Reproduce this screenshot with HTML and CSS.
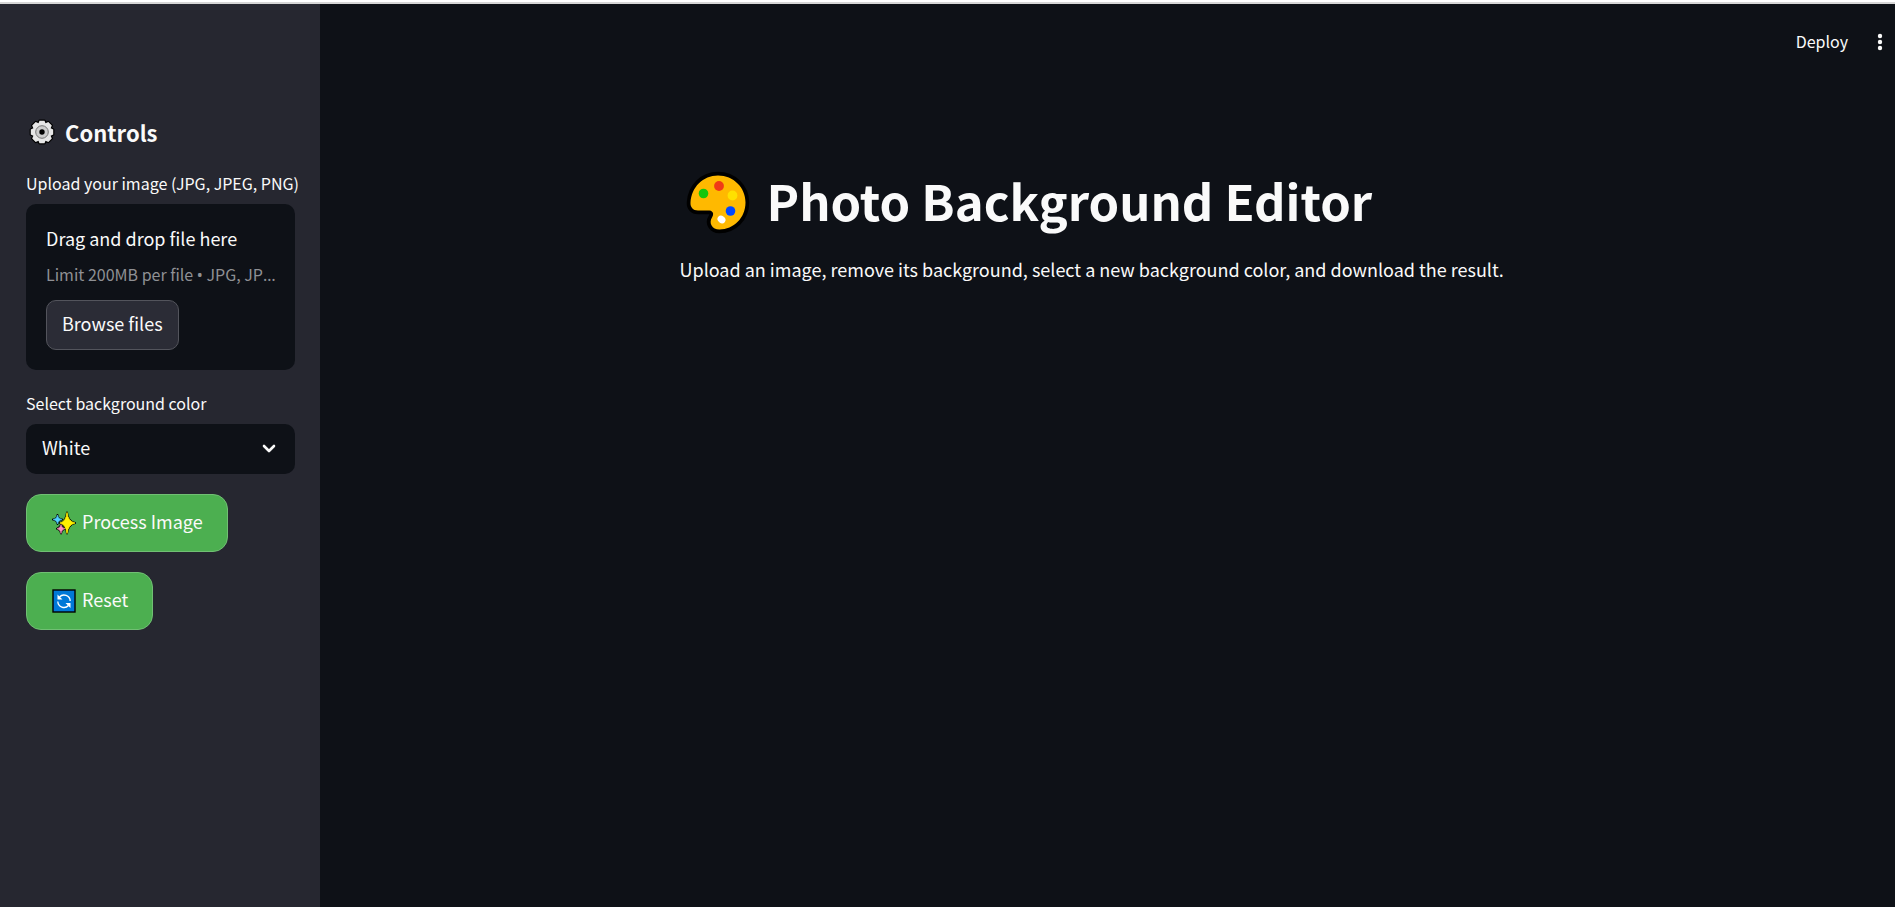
FILE: index.html
```html
<!DOCTYPE html>
<html lang="en">
<head>
<meta charset="utf-8">
<title>Photo Background Editor</title>
<link rel="stylesheet" href="styles.css">
</head>
<body>
<div class="app">
  <aside class="sidebar">
    <h2 class="sidebar-title">
      <svg class="icon-gear" viewBox="0 0 26 26" aria-hidden="true">
        <path d="M10.500 1.800h5l1 2.400 2.800-1.200 3.500 3.500-1.200 2.800 2.600 1.200v5l-2.600 1.200 1.200 2.800-3.500 3.500-2.800-1.200-1 2.400h-5l-1-2.400-2.800 1.200-3.500-3.500 1.200-2.800-2.600-1.200v-5l2.600-1.200-1.200-2.800 3.500-3.500 2.800 1.200z" fill="#000" stroke="#000" stroke-width="2.400" stroke-linejoin="round"/>
        <path d="M10.500 1.800h5l1 2.400 2.800-1.200 3.500 3.500-1.200 2.800 2.600 1.200v5l-2.600 1.200 1.200 2.800-3.500 3.500-2.800-1.200-1 2.400h-5l-1-2.400-2.800 1.200-3.500-3.500 1.200-2.800-2.600-1.200v-5l2.600-1.200-1.200-2.800 3.500-3.500 2.800 1.200z" fill="#e6e6e6"/>
        <circle cx="13" cy="13" r="6.300" fill="#ccc" stroke="#777" stroke-width="1"/>
        <circle cx="13" cy="13" r="2.700" fill="#000"/>
      </svg>
      <span>Controls</span>
    </h2>
    <div class="field">
      <label class="label" for="browse">Upload your image (JPG, JPEG, PNG)</label>
      <section class="dropzone">
        <div class="drop-text">Drag and drop file here</div>
        <div class="drop-limit">Limit 200MB per file <span class="mark">•</span> JPG, JP<span class="mark">…</span></div>
        <button class="browse" id="browse" type="button">Browse files</button>
      </section>
    </div>
    <div class="field field-select">
      <label class="label" for="color">Select background color</label>
      <div class="select-wrap">
        <select class="select" id="color"><option>White</option></select>
        <svg class="chevron" viewBox="0 0 14 10" aria-hidden="true"><path d="M2 2l5 5 5-5" fill="none" stroke="#fafafa" stroke-width="2.600" stroke-linecap="round" stroke-linejoin="round"/></svg>
      </div>
    </div>
    <button class="action" type="button">
      <svg class="icon-action" viewBox="0 0 24 24" aria-hidden="true">
        <g stroke="#000" stroke-width="2" stroke-linejoin="round">
          <path d="M5.500 4Q6 8 10 8.500 6 9 5.500 13 5 9 1 8.500 5 8 5.500 4z"/>
          <path d="M9 13.500Q9.500 17 13 17.700 9.500 18.400 9 22.500 8.500 18.400 5 17.700 8.500 17 9 13.500z"/>
          <path d="M15 1.500Q16 10.500 23 12 16 13.500 15 22.500 14 13.500 8 12 14 10.500 15 1.500z" fill="#fff100"/>
        </g>
        <path d="M5.500 4Q6 8 10 8.500 6 9 5.500 13 5 9 1 8.500 5 8 5.500 4z" fill="#50d0ff" stroke="#50d0ff" stroke-width=".6"/>
        <path d="M9 13.500Q9.500 17 13 17.700 9.500 18.400 9 22.500 8.500 18.400 5 17.700 8.500 17 9 13.500z" fill="#ff8fc0" stroke="#ff8fc0" stroke-width=".6"/>
        <path d="M15 1.500Q16 10.500 23 12 16 13.500 15 22.500 14 13.500 8 12 14 10.500 15 1.500z" fill="#fff100" stroke="#fff100" stroke-width=".8"/>
      </svg>
      <span>Process Image</span>
    </button>
    <button class="action" type="button">
      <svg class="icon-action" viewBox="0 0 24 24" aria-hidden="true">
        <rect x="1" y="1" width="22" height="22" fill="#0078d7" stroke="#000" stroke-width="1.400"/>
        <g fill="none" stroke="#fff" stroke-width="1.300">
          <path d="M7.500 8a6.200 6.200 0 0 1 10.700 4M16.500 16.500A6.200 6.200 0 0 1 5.800 12.500"/>
        </g>
        <path d="M5.500 5.500v5h5zM18.500 19v-5h-5z" fill="#fff"/>
      </svg>
      <span>Reset</span>
    </button>
  </aside>
  <main class="main">
    <header class="toolbar">
      <button class="deploy" type="button">Deploy</button>
      <button class="menu" type="button" aria-label="Menu">
        <svg class="dots" viewBox="0 0 6 18" aria-hidden="true"><g fill="#fafafa"><circle cx="3" cy="3" r="2.200"/><circle cx="3" cy="9" r="2.200"/><circle cx="3" cy="15" r="2.200"/></g></svg>
      </button>
    </header>
    <div class="content">
      <h1 class="title">
        <svg class="icon-palette" viewBox="0 0 64 64" aria-hidden="true">
          <path d="M4.500 32.500C5.500 17 17 5.500 32 5.500c15.500 0 27.500 12 27.500 27 0 15.500-12 27-26 27-7.500 0-11-6.500-7.500-12 2-3 1.500-6.500-2.500-7H12c-5 0-7.800-3.500-7.500-8z" fill="#ffb900" stroke="#000" stroke-width="7.500" stroke-linejoin="round"/>
          <path d="M4.500 32.500C5.500 17 17 5.500 32 5.500c15.500 0 27.500 12 27.500 27 0 15.500-12 27-26 27-7.500 0-11-6.500-7.500-12 2-3 1.500-6.500-2.500-7H12c-5 0-7.800-3.500-7.500-8z" fill="#ffb900"/>
          <circle cx="17.500" cy="23.500" r="4.800" fill="#16c60c"/>
          <circle cx="33" cy="16" r="4.900" fill="#f03a17"/>
          <circle cx="46.500" cy="25.500" r="4.900" fill="#ffe000"/>
          <circle cx="44.500" cy="41" r="4.800" fill="#0047ff"/>
          <ellipse cx="35.500" cy="49.500" rx="4.200" ry="3.500" transform="rotate(40 35.500 49.500)" fill="#fff"/>
        </svg>
        <span class="title-text">Photo Background Editor</span>
      </h1>
      <p class="intro">Upload an image, remove its background, select a new background color, and download the result.</p>
    </div>
  </main>
</div>
</body>
</html>
```
FILE: styles.css
```css
* { box-sizing: border-box; }
body {
  margin: 0;
  background: #0e1117;
  color: #fafafa;
  font-family: "Noto Sans CJK SC", "Noto Sans", sans-serif;
  font-size: 18px;
  line-height: 32px;
}
button, select { font: inherit; color: inherit; }
.app {
  display: flex;
  min-height: 100vh;
  border-top: 2px solid #fff;
  box-shadow: inset 0 2px #d6d6d6;
  padding-top: 2px;
}
.sidebar {
  flex: none;
  width: 320px;
  padding: 110px 25px 40px 26px;
  background: #262730;
  display: flex;
  flex-direction: column;
  align-items: flex-start;
  gap: 20px;
}
.sidebar-title {
  display: flex;
  align-items: center;
  gap: 10px;
  margin: 0 0 2px;
  padding-left: 3px;
  font-size: 22px;
  line-height: 36px;
}
.icon-gear { width: 26px; height: 26px; }
.field { width: 100%; }
.field-select { padding-top: 2px; }
.label {
  display: block;
  font-size: 16px;
  line-height: 22px;
  margin-bottom: 10px;
  white-space: nowrap;
}
.dropzone {
  background: #0e1117;
  border-radius: 10px;
  padding: 18px 20px 20px;
}
.drop-text { line-height: 32px; }
.drop-limit {
  margin: 6px 0 11px;
  color: #8f9094;
  font-size: 16px;
  line-height: 28px;
  white-space: nowrap;
}
.mark { font-family: "Noto Sans", sans-serif; }
.browse {
  display: block;
  height: 50px;
  padding: 0 15px 4px;
  background: #2b2c36;
  border: 1px solid #53545c;
  border-radius: 10px;
}
.select-wrap { position: relative; }
.select {
  appearance: none;
  display: block;
  width: 100%;
  height: 50px;
  padding: 0 16px 4px;
  background: #0e1117;
  border: 0;
  border-radius: 10px;
}
.chevron {
  position: absolute;
  right: 19px;
  top: 20px;
  width: 14px;
  height: 10px;
}
.action {
  display: flex;
  align-items: center;
  gap: 6px;
  height: 58px;
  padding: 0 24px 0 25px;
  background: #4caf50;
  border: 1px solid #71bf74;
  border-radius: 15px;
}
.action span { padding-bottom: 4px; }
.icon-action { width: 24px; height: 24px; }
.main { flex: 1; min-width: 0; }
.toolbar {
  display: flex;
  justify-content: flex-end;
  align-items: center;
  gap: 22px;
  height: 76px;
  padding: 0 5px 0 20px;
}
.deploy, .menu { background: none; border: 0; padding: 0; }
.deploy { font-size: 16px; padding-bottom: 2px; }
.menu { display: flex; padding: 4px; }
.dots { width: 12px; height: 18px; }
.content {
  max-width: 896px;
  margin: 0 auto;
  padding: 87px 20px 40px;
}
.title {
  display: flex;
  align-items: center;
  gap: 17px;
  margin: 0;
  padding-left: 6px;
  font-size: 49px;
  font-weight: 700;
  line-height: 66px;
}
.title-text { padding-bottom: 4px; }
.icon-palette { flex: none; width: 64px; height: 64px; }
.intro { margin: 16px 0 0; }
```
